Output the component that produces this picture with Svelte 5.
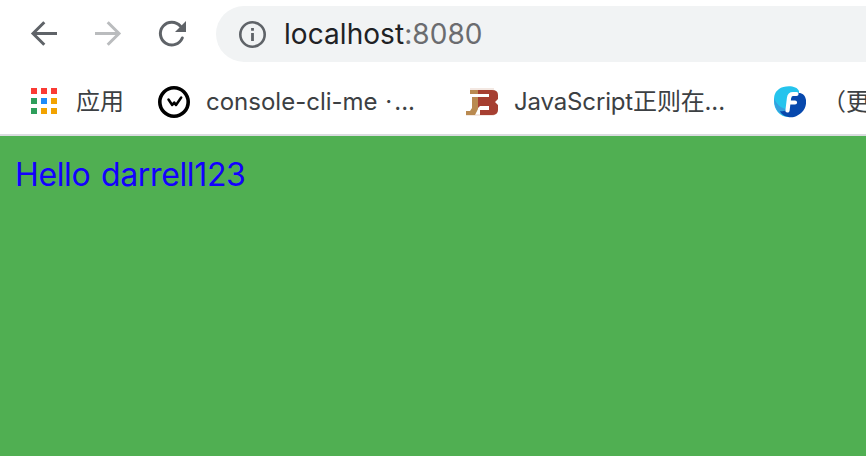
<script>
  const colours = [
    '#fa3b34', '#fa3b34', '#fa3b34',
    '#2e9e5b', '#1e8bf8', '#f2a300',
    '#2e9e5b', '#f2a300', '#f2a300'
  ];
</script>

<div class="window">
  <header class="toolbar">
    <svg class="nav" width="32" height="32" viewBox="0 0 32 32" fill="none" stroke="#5f6368" stroke-width="3">
      <path d="M16.3 4.3 5 15.5 16.3 26.7M5 15.5H29" />
    </svg>
    <svg class="nav" width="32" height="32" viewBox="0 0 32 32" fill="none" stroke="#babcbe" stroke-width="3">
      <path d="M15.7 4.3 27 15.5 15.7 26.7M3 15.5H27" />
    </svg>
    <svg class="nav" width="32" height="32" viewBox="0 0 32 32">
      <path d="M24.5 8.2A11.4 11.4 0 1 0 26.3 20" fill="none" stroke="#5f6368" stroke-width="3" stroke-linecap="round" />
      <path d="M30 3v11H19z" fill="#5f6368" />
    </svg>
    <div class="address">
      <svg width="28" height="28" viewBox="0 0 28 28">
        <circle cx="14.5" cy="14.5" r="12.2" fill="none" stroke="#5f6368" stroke-width="2.6" />
        <path d="M13.1 8h2.8v2.8h-2.8zM13.1 13h2.8v8h-2.8z" fill="#5f6368" />
      </svg>
      <span class="url">localhost<span>:8080</span></span>
    </div>
  </header>

  <nav class="bookmarks">
    <div class="item apps">
      <div class="grid">
        {#each colours as c}<i style="background: {c}"></i>{/each}
      </div>
      <span class="label">应用</span>
    </div>
    <div class="item console">
      <svg width="32" height="32" viewBox="0 0 32 32" fill="none" stroke="#000">
        <circle cx="16" cy="16" r="14.2" stroke-width="3.6" />
        <path d="M10.5 13.5 14.2 19 16.2 16.5 18 19 23.2 11.5" stroke-width="2.5" stroke-linecap="round" stroke-linejoin="round" />
      </svg>
      <span class="label">console-cli-me <span class="dot">·</span>...</span>
    </div>
    <div class="item script">
      <svg width="32" height="32" viewBox="0 0 32 32">
        <path d="M4 2h24v2H4zM0 28h28v2H0z" fill="#f3e8e2" />
        <path d="M4 4h8v4H4zM6 11h6v12l-3 6H0v-4h4l2-3z" fill="#b98a50" />
        <path d="M12 4h14q6 0 6 5v4l-3 3 3 3v5q0 5-6 5H14v-5h9v-4h-9l-2 2V11h11V8H12z" fill="#a63f31" />
      </svg>
      <span class="label js">JavaScript正则在...</span>
    </div>
    <div class="item more">
      <svg width="32" height="32" viewBox="0 0 32 32">
        <path d="M5 3C10-1 23-1 25 5v12L15 31C5 31 0 23 0 15 0 9 1 6 5 3z" fill="#25c4ed" />
        <path d="M0 12c2 6 7 10 12 11v7C4 28 0 22 0 12z" fill="#36a0de" />
        <path d="M18 9c7-4 13-2 14 5 1 9-5 15-12 17-6 1-12-1-14-6 6 1 10-2 10-8z" fill="#0748ad" />
        <path d="M13.5 24.5 15 12q.5-4 4-4h3.5M14.5 16.5H21" fill="none" stroke="#fff" stroke-width="4.2" stroke-linecap="round" />
      </svg>
      <span class="label">（更</span>
    </div>
  </nav>

  <main>Hello darrell123</main>
</div>

<style>
  :global(body) { margin: 0; overflow: hidden; }
  .window {
    width: 866px; height: 456px; overflow: hidden;
    display: flex; flex-direction: column;
    background: #fff;
    font-family: Inter, "Noto Sans CJK SC", sans-serif;
  }
  .toolbar {
    height: 68px; flex: none; box-sizing: border-box;
    display: flex; align-items: center;
    padding-left: 28px; gap: 32px;
  }
  .nav { flex: none; display: block; }
  .address {
    flex: 1; height: 56px; margin-left: -4px; box-sizing: border-box;
    display: flex; align-items: center; gap: 18px;
    padding-left: 22px;
    border-radius: 28px 0 0 28px;
    background: #f1f3f4;
  }
  .address svg { flex: none; }
  .url { font-size: 28px; line-height: 40px; letter-spacing: 0.06px; color: #202124; white-space: nowrap; }
  .url span { color: #6b6c6f; }
  .bookmarks {
    height: 68px; flex: none; box-sizing: border-box;
    display: flex; align-items: center;
    border-bottom: 2px solid #dadce0;
    font-size: 24px; line-height: 36px; color: #3c4043;
    white-space: nowrap; overflow: hidden;
  }
  .item { display: flex; align-items: center; flex: none; }
  .item svg { flex: none; margin: 1px 16px 0 0; }
  .label { padding-top: 2px; }
  .dot { margin: 0 2px 0 1px; }
  .js { letter-spacing: -0.15px; }
  .apps { width: 127px; padding-left: 31px; }
  .grid {
    display: grid; grid-template-columns: repeat(3, 6px); grid-auto-rows: 6px;
    gap: 4px; margin-right: 19px;
  }
  .console, .script { width: 308px; }
  .more { width: 92px; }
  main {
    flex: 1; box-sizing: border-box;
    padding: 16px 15px;
    background: #50af52; color: #1300ff;
    font-size: 32px; line-height: 46px; letter-spacing: -0.36px; word-spacing: 2px; white-space: nowrap;
  }
</style>
